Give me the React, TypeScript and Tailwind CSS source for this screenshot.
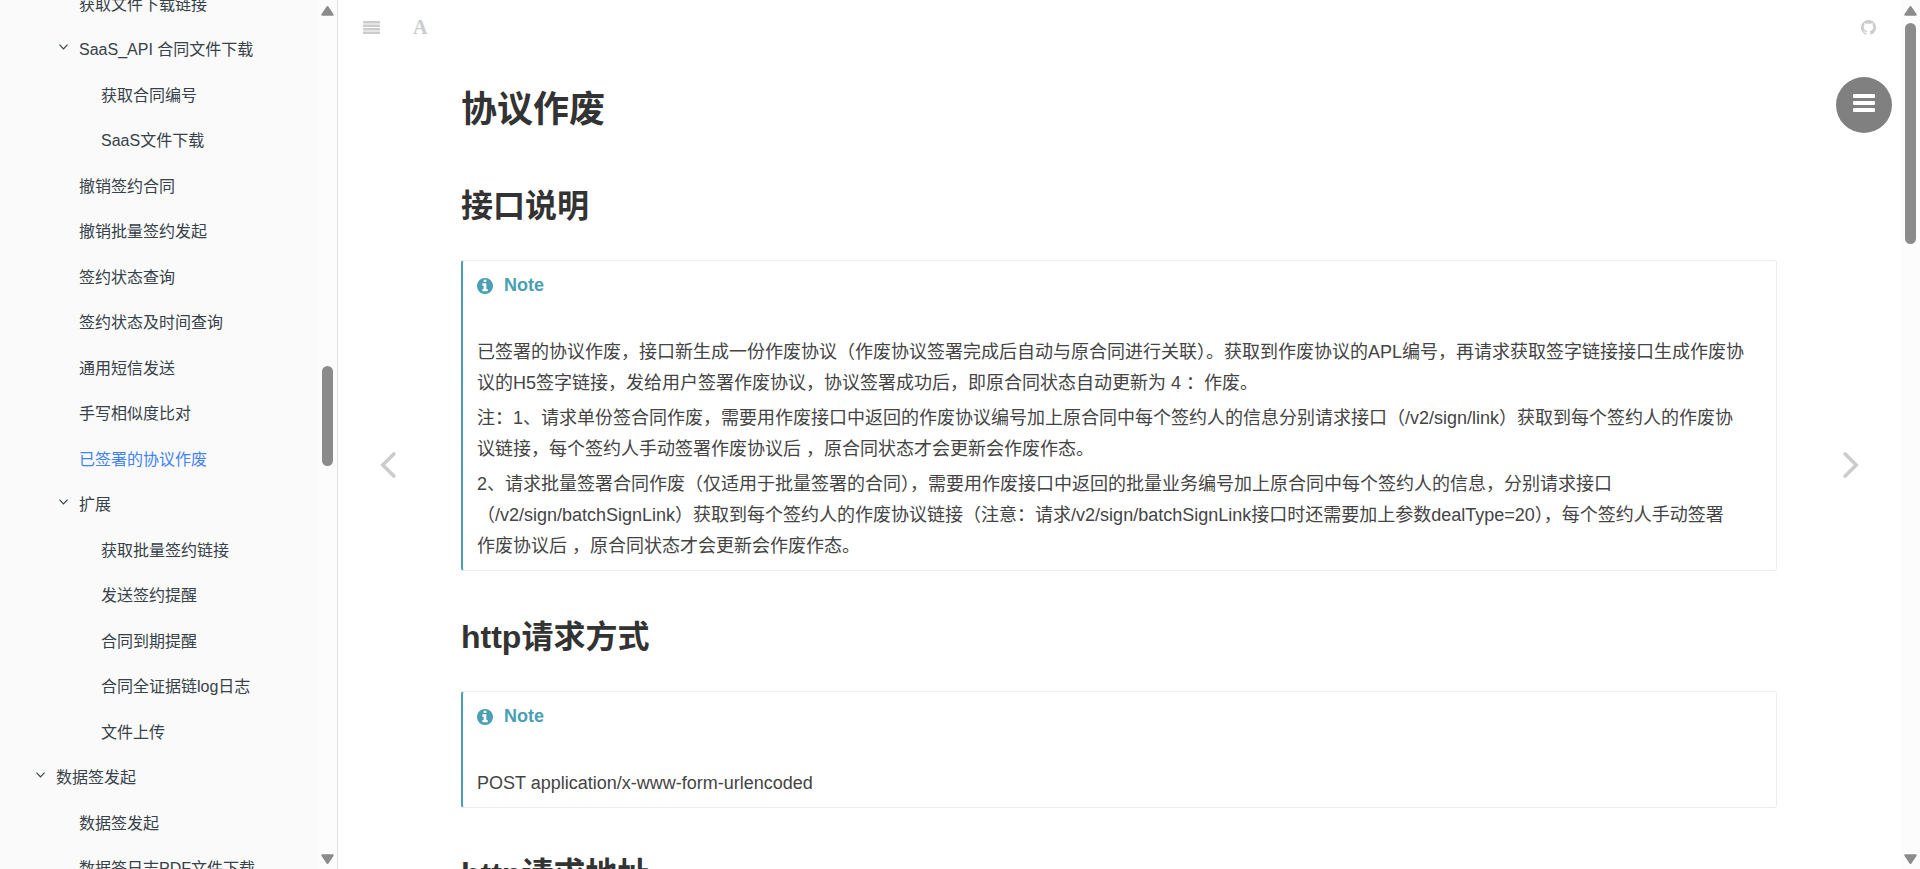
import type { ReactNode } from "react";

type NavItem = {
  label: string;
  level: 1 | 2 | 3;
  open?: boolean;
  active?: boolean;
};

const items: NavItem[] = [
  { label: "获取文件下载链接", level: 2 },
  { label: "SaaS_API 合同文件下载", level: 2, open: true },
  { label: "获取合同编号", level: 3 },
  { label: "SaaS文件下载", level: 3 },
  { label: "撤销签约合同", level: 2 },
  { label: "撤销批量签约发起", level: 2 },
  { label: "签约状态查询", level: 2 },
  { label: "签约状态及时间查询", level: 2 },
  { label: "通用短信发送", level: 2 },
  { label: "手写相似度比对", level: 2 },
  { label: "已签署的协议作废", level: 2, active: true },
  { label: "扩展", level: 2, open: true },
  { label: "获取批量签约链接", level: 3 },
  { label: "发送签约提醒", level: 3 },
  { label: "合同到期提醒", level: 3 },
  { label: "合同全证据链log日志", level: 3 },
  { label: "文件上传", level: 3 },
  { label: "数据签发起", level: 1, open: true },
  { label: "数据签发起", level: 2 },
  { label: "数据签日志PDF文件下载", level: 2 },
];

const indents = {
  1: "pl-[36px]",
  2: "pl-[59px]",
  3: "pl-[81px]",
};

function InfoIcon() {
  return (
    <svg viewBox="128 128 1536 1536" className="size-4 shrink-0" fill="currentColor" aria-hidden="true">
      <path d="M1152 1376v-160q0-14-9-23t-23-9h-96v-512q0-14-9-23t-23-9h-320q-14 0-23 9t-9 23v160q0 14 9 23t23 9h96v320h-96q-14 0-23 9t-9 23v160q0 14 9 23t23 9h448q14 0 23-9t9-23zm-128-896v-160q0-14-9-23t-23-9h-192q-14 0-23 9t-9 23v160q0 14 9 23t23 9h192q14 0 23-9t9-23zm640 416q0 209-103 385.5t-279.5 279.5-385.5 103-385.5-103-279.5-279.5-103-385.5 103-385.5 279.5-279.5 385.5-103 385.5 103 279.5 279.5 103 385.5z" />
    </svg>
  );
}

function GithubIcon() {
  return (
    <svg viewBox="128 128 1536 1536" className="size-[15px]" fill="currentColor" aria-hidden="true">
      <path d="M896 128q209 0 385.5 103t279.5 279.5 103 385.5q0 251-146.5 451.5t-378.5 277.5q-27 5-40-7t-13-30q0-3 .5-76.5t.5-134.5q0-97-52-142 57-6 102.5-18t94-39 81-66.5 53-105 20.5-150.5q0-119-79-206 37-91-8-204-28-9-81 11t-92 44l-38 24q-93-26-192-26t-192 26q-16-11-42.5-27t-83.5-38.5-85-13.5q-45 113-8 204-79 87-79 206 0 85 20.5 150t52.5 105 80.5 67 94 39 102.5 18q-39 36-49 103-21 10-45 15t-57 5-65.5-21.5-55.5-62.5q-19-32-48.5-52t-49.5-24l-20-3q-21 0-29 4.5t-5 11.5 9 14 13 12l7 5q22 10 43.5 38t31.5 51l10 23q13 38 44 61.5t67 30 69.5 7 55.5-3.5l23-4q0 38 .5 88.5t.5 54.5q0 18-13 30t-40 7q-232-77-378.5-277.5t-146.5-451.5q0-209 103-385.5t279.5-279.5 385.5-103z" />
    </svg>
  );
}

function NavRow({ item }: { item: NavItem }) {
  return (
    <li className="min-h-0">
      <a
        href="#"
        className={`flex h-full items-center gap-[11px] whitespace-nowrap text-base ${indents[item.level]} ${
          item.active ? "text-[#4183f5]" : "text-[#364149]"
        }`}
      >
        <span className="w-[9px] shrink-0 pb-[6px]">
          {item.open && (
            <svg viewBox="0 0 9 6" className="h-[6px] w-[9px]" fill="none" stroke="currentColor" strokeWidth="1.2">
              <path d="M0.5 0.7 4.5 4.8 8.5 0.7" />
            </svg>
          )}
        </span>
        <span>{item.label}</span>
      </a>
    </li>
  );
}

function Arrow({ down = false }: { down?: boolean }) {
  return (
    <svg viewBox="0 0 13 10" className={`h-[10px] w-[13px] shrink-0 ${down ? "rotate-180" : ""}`} fill="#8b8b8b">
      <path d="M5.6 0.6Q6.5-.4 7.4.6L12.6 8.2Q13 9.7 11.6 9.8H1.4Q0 9.7.4 8.2Z" />
    </svg>
  );
}

function ScrollTrack({ children }: { children: ReactNode }) {
  return (
    <div aria-hidden="true" className="flex w-[19px] shrink-0 flex-col items-center bg-[#fcfcfc] pt-[6px] pb-[5px]">
      <Arrow />
      <div className="min-h-0 flex-1">{children}</div>
      <Arrow down />
    </div>
  );
}

function Note({ children }: { children: ReactNode }) {
  return (
    <section className="rounded-[3px] border border-l-2 border-[#eaecef] border-l-[#4a9fb5] px-[14px] pt-[9px] pb-2">
      <h3 className="flex items-center gap-[11px] font-bold text-[#4a9fb5]">
        <InfoIcon />
        Note
      </h3>
      <div className="mt-9 flex flex-col gap-1 pr-[14px]">{children}</div>
    </section>
  );
}

function SectionTitle({ children }: { children: ReactNode }) {
  return <h2 className="mt-[38px] mb-[26px] text-[32px] leading-[56px] font-bold text-[#333]">{children}</h2>;
}

function PageTurn({ label, path }: { label: string; path: string }) {
  return (
    <button type="button" aria-label={label} className="flex w-[100px] shrink-0 items-center justify-center text-[#ccc]">
      <svg
        viewBox="0 0 16 26"
        className="h-[26px] w-4"
        fill="none"
        stroke="currentColor"
        strokeWidth="3.6"
        strokeLinecap="round"
      >
        <path d={path} />
      </svg>
    </button>
  );
}

export default function App() {
  return (
    <div
      lang="zh-CN"
      className="flex h-screen overflow-hidden bg-white font-['Liberation_Sans','Noto_Sans_CJK_SC',sans-serif]"
    >
      <aside className="flex w-[338px] shrink-0 border-r border-[#e3e3e3] bg-[#fafafa]">
        <nav className="min-w-0 flex-1 overflow-hidden">
          <ul className="-mt-[18px] grid h-[910px] auto-rows-fr">
            {items.map((item, i) => (
              <NavRow key={i} item={item} />
            ))}
          </ul>
        </nav>
        <ScrollTrack>
          <div className="mt-[350px] h-[100px] w-[11px] rounded-full bg-[#8b8b8b]" />
        </ScrollTrack>
      </aside>

      <main className="relative flex min-w-0 flex-1 flex-col">
        <header className="flex h-[60px] shrink-0 items-start justify-between px-[25px] pt-[17px] text-[#ccc]">
          <div className="flex items-center gap-[33px]">
            <button type="button" aria-label="目录">
              <svg viewBox="0 0 17 13" className="h-[13px] w-[17px]" fill="currentColor">
                <rect width="17" height="2.6" rx="0.6" />
                <rect y="3.5" width="17" height="2.6" rx="0.6" />
                <rect y="7" width="17" height="2.6" rx="0.6" />
                <rect y="10.4" width="17" height="2.6" rx="0.6" />
              </svg>
            </button>
            <button type="button" aria-label="字体" className="font-['Liberation_Serif',serif] text-xl leading-5 font-bold">
              A
            </button>
          </div>
          <a href="#" aria-label="GitHub" className="pt-[3px]">
            <GithubIcon />
          </a>
        </header>

        <div className="flex min-h-0 flex-1">
          <PageTurn label="上一页" path="M13.8 2 2.8 13 13.8 24" />
          <article className="min-w-0 flex-1 pr-6 pl-[23px] text-lg leading-[31px] text-[#444]">
            <h1 className="mt-5 text-4xl leading-[60px] font-bold text-[#333]">协议作废</h1>
            <SectionTitle>接口说明</SectionTitle>
            <Note>
              <p>
                已签署的协议作废，接口新生成一份作废协议（作废协议签署完成后自动与原合同进行关联）。获取到作废协议的APL编号，再请求获取签字链接接口生成作废协议的H5签字链接，发给用户签署作废协议，协议签署成功后，即原合同状态自动更新为
                4 ：作废。
              </p>
              <p>
                注：1、请求单份签合同作废，需要用作废接口中返回的作废协议编号加上原合同中每个签约人的信息分别请求接口（/v2/sign/link）获取到每个签约人的作废协议链接，每个签约人手动签署作废协议后
                ，原合同状态才会更新会作废作态。
              </p>
              <p>
                2、请求批量签署合同作废（仅适用于批量签署的合同），需要用作废接口中返回的批量业务编号加上原合同中每个签约人的信息，分别请求接口（/v2/sign/batchSignLink）获取到每个签约人的作废协议链接（注意：请求/v2/sign/batchSignLink接口时还需要加上参数dealType=20），每个签约人手动签署
                <span className="whitespace-nowrap">作废协议后</span> ，原合同状态才会更新会作废作态。
              </p>
            </Note>
            <SectionTitle>http请求方式</SectionTitle>
            <Note>
              <p>POST application/x-www-form-urlencoded</p>
            </Note>
            <SectionTitle>http请求地址</SectionTitle>
          </article>
          <PageTurn label="下一页" path="M2.2 2 13.2 13 2.2 24" />
        </div>

        <button
          type="button"
          aria-label="菜单"
          className="absolute top-[77px] right-[9px] flex size-14 justify-center rounded-full bg-[#808080] pt-[17px] text-white"
        >
          <svg viewBox="0 0 22 18" className="h-[18px] w-[22px]" fill="currentColor">
            <rect width="22" height="4" rx="1" />
            <rect y="7" width="22" height="4" rx="1" />
            <rect y="14" width="22" height="4" rx="1" />
          </svg>
        </button>
      </main>

      <ScrollTrack>
        <div className="mt-[7px] h-[221px] w-[11px] rounded-full bg-[#8b8b8b]" />
      </ScrollTrack>
    </div>
  );
}
